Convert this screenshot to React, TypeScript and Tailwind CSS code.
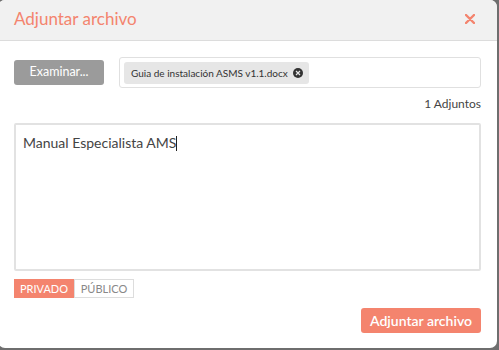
import React from "react";

export default function App() {
  const font = { fontFamily: "Lato, 'Noto Sans', sans-serif" } as React.CSSProperties;
  return (
    <div className="w-[499px] h-[350px] bg-[#6e6e6e] overflow-hidden flex" style={font}>
      <div className="ml-[-2px] w-[499px] h-[348px] bg-white rounded-[7px] flex flex-col overflow-hidden">
        <div className="h-[41px] bg-[#f1f1f1] border-b border-[#dcdcdc] flex items-center justify-between pl-[16px] pr-[22px] shrink-0">
          <span className="text-[17px] text-[#f4846e] leading-none mb-[3px]">Adjuntar archivo</span>
          <svg width="10" height="10" viewBox="0 0 10 10" className="mb-[2px]"><path d="M1 1L9 9M9 1L1 9" stroke="#f4846e" strokeWidth="2.4" strokeLinecap="round" /></svg>
        </div>
        <div className="flex flex-col pl-[16px] pr-[16px]">
          <div className="flex items-center mt-[16px] gap-[15px]">
            <button className="w-[90px] h-[25px] bg-[#9b9b9b] rounded-[3px] text-white text-[12.5px] leading-none">Examinar...</button>
            <div className="flex-1 h-[31px] border border-[#e0e0e0] rounded-[3px] flex items-center px-[4px]">
              <div className="h-[22px] bg-[#e6e6e6] rounded-[3px] flex items-center pl-[7px] pr-[6px] gap-[5px]">
                <span className="text-[10px] text-[#333] leading-none">Guia de instalación ASMS v1.1.docx</span>
                <span className="w-[10px] h-[10px] rounded-full bg-[#333] flex items-center justify-center">
                  <svg width="6" height="6" viewBox="0 0 6 6"><path d="M1 1L5 5M5 1L1 5" stroke="#e6e6e6" strokeWidth="1.2" /></svg>
                </span>
              </div>
            </div>
          </div>
          <div className="text-right text-[12px] text-[#444] mt-[10px] leading-none">1 Adjuntos</div>
          <div className="mt-[13px] h-[148px] border-2 border-[#e2e2e2] rounded-[2px] px-[7px] pt-[5px]">
            <span className="text-[14px] text-[#444] leading-none">Manual Especialista AMS</span>
            <span className="inline-block w-px h-[15px] bg-[#222] align-[-3px]"></span>
          </div>
          <div className="mt-[8px] flex">
            <span className="h-[19px] w-[60px] bg-[#f4846e] text-white text-[11px] flex items-center justify-center leading-none">PRIVADO</span>
            <span className="h-[19px] w-[60px] border border-[#dddddd] text-[#888] text-[11px] flex items-center justify-center leading-none">PÚBLICO</span>
          </div>
          <div className="flex justify-end mt-[10px]">
            <button className="w-[120px] h-[25px] bg-[#f4846e] rounded-[3px] text-white text-[14px] font-semibold leading-none">Adjuntar archivo</button>
          </div>
        </div>
      </div>
    </div>
  );
}
